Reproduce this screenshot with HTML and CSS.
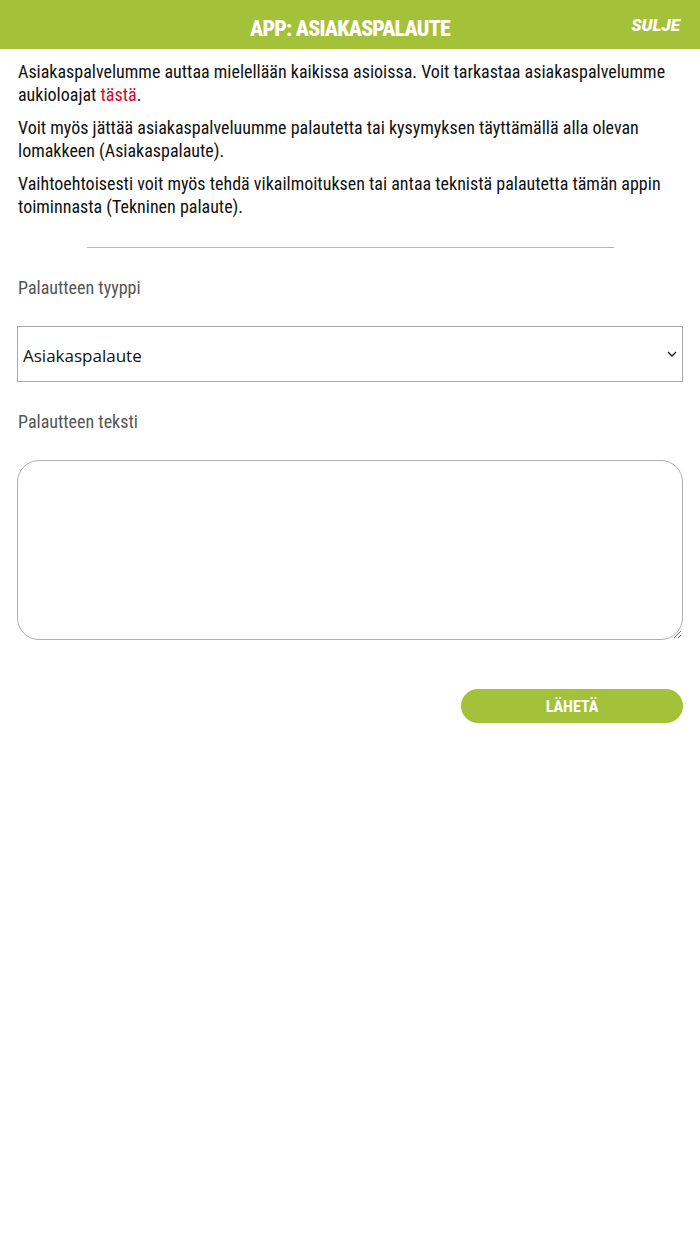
FILE: index.html
```html
<!DOCTYPE html>
<html lang="fi">
<head>
<meta charset="utf-8">
<title>App: Asiakaspalaute</title>
<link rel="stylesheet" href="styles.css">
</head>
<body>
<header class="topbar">
  <h1 class="title">APP: ASIAKASPALAUTE</h1>
  <a class="close" href="#">SULJE</a>
</header>
<main class="content">
  <p class="intro">Asiakaspalvelumme auttaa mielellään kaikissa asioissa. Voit tarkastaa asiakaspalvelumme aukioloajat <a class="link" href="#">tästä</a>.</p>
  <p class="intro">Voit myös jättää asiakaspalveluumme palautetta tai kysymyksen täyttämällä alla olevan lomakkeen (Asiakaspalaute).</p>
  <p class="intro">Vaihtoehtoisesti voit myös tehdä vikailmoituksen tai antaa teknistä palautetta tämän appin toiminnasta (Tekninen palaute).</p>
  <hr class="divider">
  <form class="form">
    <label class="label" for="type">Palautteen tyyppi</label>
    <div class="select-wrap">
      <select id="type" class="select">
        <option>Asiakaspalaute</option>
        <option>Tekninen palaute</option>
      </select>
      <svg class="chev" width="10" height="6" viewBox="0 0 10 6"><path d="M1 1l4 4 4-4" fill="none" stroke="#222" stroke-width="1.4"/></svg>
    </div>
    <label class="label label-text" for="text">Palautteen teksti</label>
    <textarea id="text" class="textarea"></textarea>
    <div class="actions">
      <button type="button" class="send">LÄHETÄ</button>
    </div>
  </form>
</main>
</body>
</html>
```
FILE: styles.css
```css
* { box-sizing: border-box; }
html, body { margin: 0; padding: 0; background: #fff; }
body { font-family: "Roboto Condensed", "Liberation Sans Narrow", Roboto, sans-serif; color: #111; }
.topbar {
  height: 49px;
  background: #a4c13a;
  display: flex;
  align-items: center;
  justify-content: center;
  position: relative;
}
.title {
  margin: 0;
  color: #fff;
  font-size: 22px;
  font-weight: 800;
  letter-spacing: -0.8px;
  padding-top: 8px;
}
.close {
  position: absolute;
  right: 20px;
  top: 15px;
  color: #fff;
  font-weight: 900;
  font-style: italic;
  font-size: 17px;
  text-decoration: none;
  font-family: Roboto, sans-serif;
}
.content { padding: 11px 17px 0 18px; }
.intro { margin: 0 0 10px; font-size: 18px; line-height: 23px; }
.link { color: #e3001b; text-decoration: none; }
.divider {
  width: 527px;
  margin: 29px auto 0 auto;
  border: 0;
  border-top: 1px solid #b5b5b5;
  height: 0;
}
.form { display: flex; flex-direction: column; }
.label { color: #555; font-size: 18px; line-height: 23px; margin: 28px 0 27px; }
.label-text { margin-bottom: 27px; }
.select-wrap { position: relative; margin-left: -1px; }
.select {
  width: 100%;
  height: 56px;
  appearance: none;
  -webkit-appearance: none;
  border: 1px solid #a8a8a8;
  border-radius: 0;
  background: #fff;
  font-family: "Open Sans", "Noto Sans", sans-serif;
  font-size: 17px;
  padding: 3px 5px 0;
  color: #111;
}
.chev { position: absolute; right: 6px; top: 25px; }
.textarea {
  margin-left: -1px;
  height: 180px;
  border: 1px solid #b0b0b0;
  border-radius: 22px;
  resize: vertical;
}
.actions { display: flex; justify-content: flex-end; margin-top: 49px; }
.send {
  width: 222px;
  height: 34px;
  border: 0;
  border-radius: 17px;
  background: #a4c13a;
  color: #fff;
  font-family: "Roboto Condensed", Roboto, sans-serif;
  font-weight: 700;
  font-size: 16px;
  padding-top: 2px;
}
```
